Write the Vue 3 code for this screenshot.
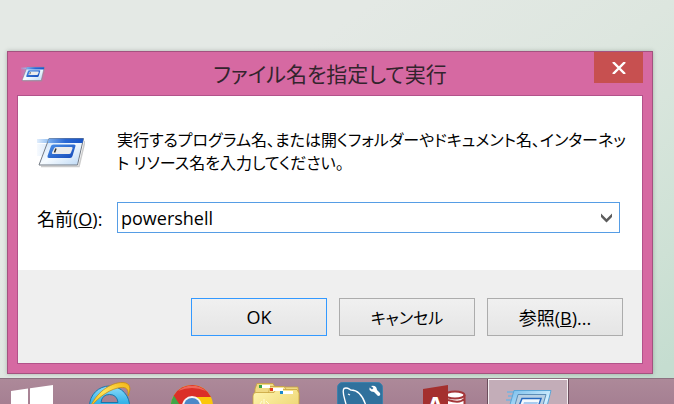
<script setup>
import { ref } from 'vue'

const command = ref('powershell')
</script>

<template>
  <div class="desktop">
    <svg class="defs" width="0" height="0" aria-hidden="true">
      <defs>
        <linearGradient id="sheet" x1="0" y1="0" x2="1" y2="1">
          <stop offset="0" stop-color="#c3dcf8" />
          <stop offset="0.5" stop-color="#f6fbff" />
          <stop offset="1" stop-color="#b9d6f4" />
        </linearGradient>
        <linearGradient id="frame" x1="0" y1="0" x2="1" y2="1">
          <stop offset="0" stop-color="#4a90ea" />
          <stop offset="1" stop-color="#1549b8" />
        </linearGradient>
        <linearGradient id="strip">
          <stop offset="0" stop-color="#7db0ee" />
          <stop offset="0.5" stop-color="#2a68d4" />
          <stop offset="1" stop-color="#1a55c6" />
        </linearGradient>
        <linearGradient id="streak">
          <stop offset="0" stop-color="#8fbdf2" stop-opacity="0.25" />
          <stop offset="1" stop-color="#8fbdf2" />
        </linearGradient>
        <symbol id="run" viewBox="0 0 48 32">
          <path d="M0 3H12L10 7H0Z" fill="url(#streak)" />
          <path d="M0 8H10L5 20H0Z" fill="url(#streak)" opacity="0.3" />
          <path d="M4 30.500H42L48 5" fill="none" stroke="#9a9a9a" stroke-opacity="0.5" stroke-width="1.500" />
          <path d="M12 2.500H46.500L40.500 29H2Z" fill="url(#sheet)" stroke="#737a84" />
          <path d="M12 2.500H46.500L45.500 7H10.500Z" fill="url(#strip)" />
          <path d="M16.500 8.500H37Q39 8.500 38.500 10L35.500 20Q35 22 33 22H12Q10 22 10.500 20L14 10Q14.500 8.500 16.500 8.500Z" fill="url(#frame)" />
          <path d="M19 11H34.500Q36 11 35.500 12.500L34 16.500Q33.500 18 32 18H16Q14.500 18 15 16.500L17 12.500Q17.500 11 19 11Z" fill="#ececec" />
          <path d="M19 12.500L17.500 16.500" stroke="#333" stroke-width="1.500" />
        </symbol>
      </defs>
    </svg>

    <main class="window" role="dialog" aria-labelledby="run-title">
      <header class="titlebar">
        <svg class="title-icon" width="24" height="16" aria-hidden="true"><use href="#run" /></svg>
        <h1 id="run-title" class="title">ファイル名を指定して実行</h1>
        <button class="close" type="button" aria-label="閉じる">
          <svg width="14" height="12" viewBox="0 0 14 12" aria-hidden="true">
            <path d="M1 0L13 12M13 0L1 12" stroke="#fff" stroke-width="2.400" />
          </svg>
        </button>
      </header>

      <form class="client" @submit.prevent>
        <div class="content">
          <svg class="run-icon" width="48" height="32" aria-hidden="true"><use href="#run" /></svg>
          <p class="message">実行するプログラム名、または開くフォルダーやドキュメント名、インターネッ<br>ト リソース名を入力してください。</p>
          <label class="label" for="command">名前(<u>O</u>):</label>
          <div class="combo">
            <input id="command" v-model="command" type="text" autocomplete="off">
            <button class="drop" type="button" aria-label="履歴を表示">
              <svg width="11" height="10" viewBox="0 0 11 10" aria-hidden="true">
                <path d="M0 0.500L5.500 6L11 0.500V4L5.500 9.500L0 4Z" fill="#5c5c5c" />
              </svg>
            </button>
          </div>
        </div>
        <footer class="actions">
          <button class="action primary" type="submit">OK</button>
          <button class="action kana" type="button">キャンセル</button>
          <button class="action" type="button">参照(<u>B</u>)...</button>
        </footer>
      </form>
    </main>

    <nav class="taskbar">
      <button class="task start" type="button" aria-label="スタート">
        <svg width="48" height="48" viewBox="0 0 48 48">
          <path d="M2 12L19 9.500V27H2ZM21 9.200L44 6V27H21ZM2 29H19V46L2 44ZM21 29H44V48L21 46Z" fill="#fff" />
        </svg>
      </button>
      <button class="task" type="button" aria-label="Internet Explorer">
        <svg width="48" height="48" viewBox="0 0 48 48">
          <defs>
            <linearGradient id="ie" x1="0" y1="0" x2="0" y2="1">
              <stop offset="0" stop-color="#8fdcfa" />
              <stop offset="0.4" stop-color="#37b5ea" />
              <stop offset="1" stop-color="#1b86cf" />
            </linearGradient>
            <linearGradient id="gold" x1="0" y1="1" x2="1" y2="0">
              <stop offset="0" stop-color="#f1b90d" />
              <stop offset="0.5" stop-color="#ffe45a" />
              <stop offset="1" stop-color="#f3b414" />
            </linearGradient>
          </defs>
          <path d="M25.500 7A20 20 0 0 1 45.500 29H17Q18 37 26 37Q31 37 33 34H44Q39 47 25.500 47A20 20 0 0 1 25.500 7ZM17 23.500H34Q33 15.500 25.500 15.500Q18 15.500 17 23.500Z" fill="url(#ie)" stroke="#1976ab" fill-rule="evenodd" />
          <path d="M6 29C11 15 26 3 39 3.500C47 4 47 10 44 17C45 10 42 8 37 8.500C27 9.500 15 17 6 29Z" fill="url(#gold)" stroke="#c58b16" stroke-width="0.800" />
        </svg>
      </button>
      <button class="task" type="button" aria-label="Google Chrome">
        <svg width="48" height="48" viewBox="0 0 48 48">
          <circle cx="24" cy="27" r="21" fill="#fbc70b" />
          <path d="M24 27L5.800 16.500A21 21 0 0 0 24 48L33 32Z" fill="#3fa648" />
          <path d="M24 18H43A21 21 0 0 0 5.800 16.500L15 31L17 23Z" fill="#db2f28" />
          <path d="M10 12A21 21 0 0 1 38 12Q24 6 10 12Z" fill="#ed675b" />
          <circle cx="24" cy="27" r="10" fill="#f7f7f7" />
          <circle cx="24" cy="27" r="8" fill="#4b88c8" />
        </svg>
      </button>
      <button class="task" type="button" aria-label="エクスプローラー">
        <svg width="48" height="48" viewBox="0 0 48 48">
          <defs>
            <linearGradient id="folder" x1="0" y1="0" x2="1" y2="1">
              <stop offset="0" stop-color="#fff5b0" />
              <stop offset="1" stop-color="#e8cd62" />
            </linearGradient>
          </defs>
          <g stroke="#c6a23c" stroke-width="0.800">
            <path d="M3 16V10L5 4.500H21L23 8H46L47 20H3Z" fill="#f0d983" />
            <path d="M16 16L18 7.500H32L34 10V18H16Z" fill="#f6e59a" />
            <path d="M24 10.500H45L47 14V46H1V17Q1 13.500 4 13.500H22Z" fill="url(#folder)" />
          </g>
          <path d="M7 6H18V9H7ZM20 9H31V12H20ZM28 12H41V15H28Z" fill="#fff" />
          <path d="M7 6H10V9H7Z" fill="#38a344" />
          <path d="M18 9H21V12H18Z" fill="#e33d1c" />
          <path d="M28 12H31V15H28Z" fill="#1989cc" />
          <path d="M12 20V26M8 25L10 22M17 25L14 22" stroke="#fffbd9" />
        </svg>
      </button>
      <button class="task" type="button" aria-label="MySQL Workbench">
        <svg width="48" height="48" viewBox="0 0 48 48">
          <rect x="1.500" y="3.500" width="45" height="44" rx="5" fill="#30719d" stroke="#3d80aa" />
          <path d="M11 30C10 22 5 13 8 9.500C11 8 13 10 15 11C22 11 27 17 30 27C31 32 33 36 38 38" fill="none" stroke="#fff" stroke-width="1.400" />
          <path d="M12 15L14 16" stroke="#fff" stroke-width="1.200" />
          <path d="M35 7Q38 6 40 8Q41 10 41 11L44 14Q45 17 42 17L38 13Q35 13 33.500 11V8.500L36 10.500L37.500 9Z" fill="#fff" />
        </svg>
      </button>
      <button class="task" type="button" aria-label="Access">
        <svg width="48" height="48" viewBox="0 0 48 48">
          <path d="M27 16H45V42H27Z" fill="#fff" />
          <ellipse cx="35" cy="16" rx="9.500" ry="3.500" fill="#fff" stroke="#a4373a" stroke-width="2" />
          <path d="M44.500 16V40M28 21Q40 25 44 20" fill="none" stroke="#a4373a" stroke-width="2" />
          <path d="M3 10L28 6V48L3 44Z" fill="#a4302f" />
          <text class="letter" x="7" y="35">A</text>
        </svg>
      </button>
      <button class="task active" type="button" aria-label="ファイル名を指定して実行">
        <svg width="48" height="48" viewBox="0 0 48 48">
          <defs>
            <linearGradient id="glass" x1="0" y1="0" x2="1" y2="1">
              <stop offset="0" stop-color="#6fb9ea" />
              <stop offset="0.6" stop-color="#d3efff" />
              <stop offset="1" stop-color="#5ea6dc" />
            </linearGradient>
          </defs>
          <path d="M3 13H10M4 17H9M2 21H8" stroke="#75b3df" stroke-width="1.500" />
          <path d="M10 11.500H47L39 43H1Z" fill="url(#glass)" stroke="#5ba5d6" />
          <path d="M14 15.500H42L35 40H7Z" fill="#b8d0e4" stroke="#5c8db7" />
          <path d="M18 19.500H37L31 37H11Z" fill="#f4f9fd" stroke="#286ac0" stroke-width="1.500" />
          <path d="M20 23H34L32 29H18Z" fill="#a8cbef" />
        </svg>
      </button>
    </nav>
  </div>
</template>

<style>
body {
  margin: 0;
}
</style>

<style scoped>
.desktop {
  display: flex;
  flex-direction: column;
  box-sizing: border-box;
  height: 100vh;
  padding-top: 51px;
  overflow: hidden;
  background: linear-gradient(145deg, #e4e9e5 30%, #dde6df 54%, #d8e5dc 64%, #cee1d5 82%, #c5ddd0 95%);
  color: #000;
  font-family: "Open Sans", "Noto Sans CJK JP", sans-serif;
  font-size: 18px;
  font-feature-settings: "palt";
}

.defs {
  position: absolute;
}

button {
  padding: 0;
  border: 0;
  color: inherit;
  font: inherit;
  font-feature-settings: inherit;
}

.window {
  flex: none;
  margin: 0 21px 4px 7px;
  padding: 0 9px 9px;
  border: 1px solid #a3527f;
  background: #d669a2;
  box-shadow: 0 0 4px rgba(60, 80, 70, 0.35);
}

.titlebar {
  display: grid;
  grid-template-columns: 49px 1fr 49px;
  align-items: center;
  height: 43px;
}

.title-icon {
  margin-left: 4px;
}

.title {
  margin: 0;
  color: #33242d;
  font-size: 21px;
  font-weight: 400;
  line-height: 30px;
  text-align: center;
}

.close {
  display: grid;
  place-items: center;
  align-self: start;
  height: 31px;
  background: #c75050;
}

.client {
  border: 1px solid #b2528a;
  background: #fff;
}

.content {
  display: grid;
  grid-template-columns: 72px minmax(0, 1fr);
  align-items: center;
  column-gap: 8px;
  row-gap: 27px;
  padding: 33px 22px 37px 19px;
}

.message {
  margin: 0;
  font-size: 16px;
  line-height: 23px;
  white-space: nowrap;
}

.label {
  white-space: nowrap;
}

.combo {
  display: flex;
  align-items: center;
  height: 29px;
  border: 1px solid #569de5;
  background: #fff;
}

.combo input {
  flex: 1;
  min-width: 0;
  padding: 0 3px;
  border: 0;
  outline: 0;
  background: none;
  color: inherit;
  font: inherit;
}

.drop {
  display: grid;
  place-items: center;
  width: 26px;
  height: 29px;
  background: none;
}

.actions {
  display: flex;
  justify-content: flex-end;
  gap: 12px;
  padding: 28px 19px 27px;
  background: #efefef;
}

.action {
  width: 136px;
  height: 38px;
  border: 1px solid #acacac;
  background: linear-gradient(#f0f0f0, #e5e5e5);
}

.kana {
  font-size: 16px;
}

.primary {
  border-color: #3399ff;
}

.taskbar {
  display: flex;
  flex: 1;
  align-items: flex-start;
  gap: 2px;
  min-height: 0;
  overflow: hidden;
  border-top: 1px solid #8c7180;
  background: linear-gradient(#ad8999, #a57f92 26px);
}

.task {
  display: flex;
  flex: none;
  justify-content: center;
  width: 82px;
  height: 48px;
  background: none;
}

.start {
  width: 65px;
}

.active {
  background: #c3adb8;
  box-shadow: inset 1px 0 #6b4d5c, inset -1px 0 #6b4d5c, inset 0 1px #fff, inset 2px 0 #f4edf0, inset -2px 0 #f4edf0;
}

.letter {
  fill: #fff;
  font-family: "Open Sans", sans-serif;
  font-size: 24px;
  font-weight: 700;
}
</style>
